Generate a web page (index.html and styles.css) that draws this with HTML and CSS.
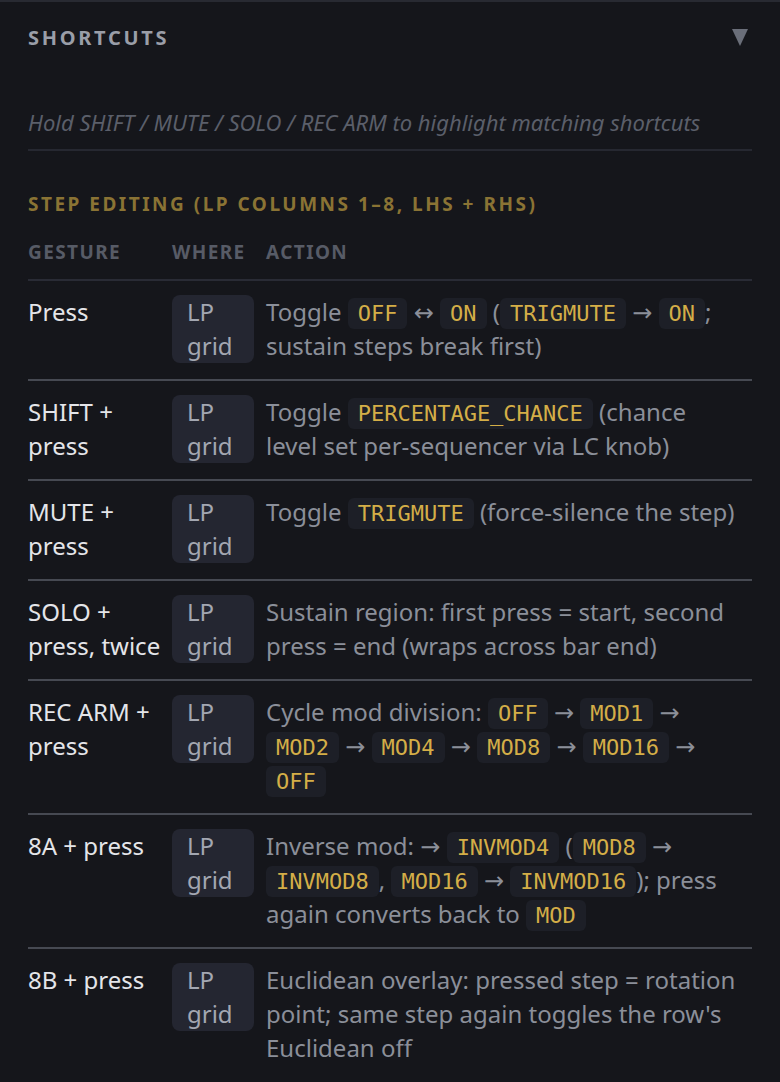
FILE: index.html
```html
<!DOCTYPE html>
<html>
<head>
<meta charset="utf-8">
<link rel="stylesheet" href="styles.css">
</head>
<body>
<div class="panel">
  <div class="panel-head">
    <span class="panel-title">SHORTCUTS</span>
    <svg class="caret" width="16" height="17" viewBox="0 0 16 17"><polygon points="0,0 16,0 8,17" fill="#6a6e79"/></svg>
  </div>
  <p class="hint">Hold SHIFT / MUTE / SOLO / REC ARM to highlight matching shortcuts</p>
  <h3 class="section">STEP EDITING (LP COLUMNS 1–8, LHS + RHS)</h3>
  <div class="table">
    <div class="row head">
      <div class="c1">GESTURE</div><div class="c2">WHERE</div><div class="c3">ACTION</div>
    </div>
    <div class="row">
      <div class="c1 gesture">Press</div>
      <div class="c2"><span class="where">LP grid</span></div>
      <div class="c3 action">Toggle <code>OFF</code> ↔ <code>ON</code> (<code>TRIGMUTE</code> → <code>ON</code>; sustain steps break first)</div>
    </div>
    <div class="row">
      <div class="c1 gesture">SHIFT + press</div>
      <div class="c2"><span class="where">LP grid</span></div>
      <div class="c3 action">Toggle <code>PERCENTAGE_CHANCE</code> (chance level set per-sequencer via LC knob)</div>
    </div>
    <div class="row">
      <div class="c1 gesture">MUTE + press</div>
      <div class="c2"><span class="where">LP grid</span></div>
      <div class="c3 action">Toggle <code>TRIGMUTE</code> (force-silence the step)</div>
    </div>
    <div class="row">
      <div class="c1 gesture">SOLO + press, twice</div>
      <div class="c2"><span class="where">LP grid</span></div>
      <div class="c3 action">Sustain region: first press = start, second press = end (wraps across bar end)</div>
    </div>
    <div class="row">
      <div class="c1 gesture">REC ARM + press</div>
      <div class="c2"><span class="where">LP grid</span></div>
      <div class="c3 action">Cycle mod division: <code>OFF</code> → <code>MOD1</code> → <code>MOD2</code> → <code>MOD4</code> → <code>MOD8</code> → <code>MOD16</code> → <code>OFF</code></div>
    </div>
    <div class="row">
      <div class="c1 gesture">8A + press</div>
      <div class="c2"><span class="where">LP grid</span></div>
      <div class="c3 action">Inverse mod: → <code>INVMOD4</code> (<code>MOD8</code> → <code>INVMOD8</code>, <code>MOD16</code> → <code>INVMOD16</code>); press again converts back to <code>MOD</code></div>
    </div>
    <div class="row">
      <div class="c1 gesture">8B + press</div>
      <div class="c2"><span class="where">LP grid</span></div>
      <div class="c3 action">Euclidean overlay: pressed step = rotation point; same step again toggles the row's Euclidean off</div>
    </div>
  </div>
</div>
</body>
</html>
```

FILE: styles.css
```css
html, body {
  margin: 0;
  padding: 0;
  background: #15161b;
}

body {
  font-family: "Noto Sans", "DejaVu Sans", sans-serif;
  color: #8b8f99;
}

.panel {
  border-top: 2px solid #282a32;
  padding: 0 28px 40px 28px;
  min-height: 1080px;
  background: #15161b;
}

.panel-head {
  display: flex;
  justify-content: space-between;
  align-items: flex-start;
  padding-top: 24px;
}

.panel-title {
  font-size: 20px;
  font-weight: 700;
  letter-spacing: 2.7px;
  line-height: 24px;
  color: #9a9ea8;
}

.caret {
  display: block;
  margin: 3px 4px 0 0;
}

.hint {
  margin: 58px 0 0 0;
  padding: 0 0 13px 0;
  font-size: 22px;
  font-style: italic;
  line-height: 28px;
  color: #5b5f6a;
  border-bottom: 2px solid #262831;
}

.section {
  margin: 41px 0 0 0;
  font-size: 19px;
  font-weight: 700;
  letter-spacing: 2.5px;
  line-height: 24px;
  color: #8a7334;
}

.table {
  margin-top: 24px;
}

.row {
  display: grid;
  grid-template-columns: 144px 94px 1fr;
  padding: 14px 0 16px 0;
  border-top: 2px solid #464952;
  font-size: 24px;
  line-height: 34px;
}

.c1 {
  padding-right: 8px;
}

.c2 {
  padding-right: 12px;
}

.c3 {
  padding-right: 12px;
}

.row.head {
  border-top: none;
  padding: 0 0 15px 0;
  border-bottom: 2px solid #292b35;
  font-size: 19px;
  font-weight: 700;
  letter-spacing: 1.4px;
  line-height: 24px;
  color: #575b66;
}

.row.head + .row {
  border-top: none;
}

.gesture {
  color: #e4e5e9;
}

.where {
  display: block;
  background: #242631;
  border-radius: 8px;
  padding: 0 0 0 15px;
  color: #a3a7b1;
}

.action {
  color: #8b8f99;
}

code {
  font-family: "DejaVu Sans Mono", "Liberation Mono", monospace;
  font-size: 22px;
  line-height: 20px;
  color: #d4ae47;
  background: #1d1f27;
  border-radius: 6px;
  padding: 3px 10px;
}
```
